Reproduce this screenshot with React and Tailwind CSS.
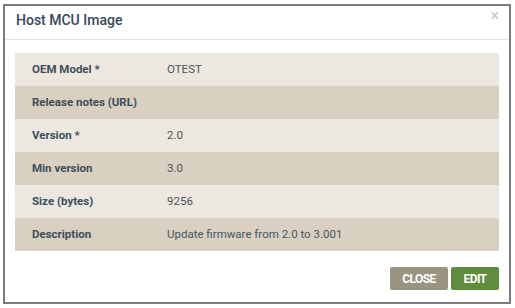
const rows = [
  { label: "OEM Model *", value: "OTEST" },
  { label: "Release notes (URL)", value: "" },
  { label: "Version *", value: "2.0" },
  { label: "Min version", value: "3.0" },
  { label: "Size (bytes)", value: "9256" },
  { label: "Description", value: "Update firmware from 2.0 to 3.001" },
];

const App = () => {
  return (
    <div className="w-[515px] h-[308px] bg-white pl-[3px] pt-[4px] font-['Roboto',sans-serif]">
      <div className="w-[508px] h-[300px] border-2 border-[#7b7b7b] bg-white flex flex-col">
        {/* header */}
        <div className="relative h-[34px] border-b border-[#e5e5e5] pl-[11px] pt-[3px]">
          <h4 className="text-[14px] font-medium text-[#34495e] leading-[22px]">Host MCU Image</h4>
          <span className="absolute right-[10px] top-[1px] text-[16px] text-[#c4c4c4] leading-[18px]">×</span>
        </div>

        {/* body */}
        <div className="px-[10px] pt-[13px]">
          <div className="flex flex-col">
            {rows.map((row, i) => (
              <div
                key={row.label}
                className={
                  "grid grid-cols-[152px_1fr] h-[33px] items-center text-[11.5px] " +
                  (i % 2 === 0 ? "bg-[#ede8df]" : "bg-[#d9d0c1]")
                }
              >
                <span className="pl-[17px] font-bold text-[#3b4e5c]">{row.label}</span>
                <span className="text-[#46565f]">{row.value}</span>
              </div>
            ))}
          </div>
        </div>

        {/* footer */}
        <div className="flex justify-end gap-[3px] pr-[10px] pt-[16px]">
          <button className="w-[58px] h-[23px] rounded-[2px] bg-[#9a9581] text-white text-[12px] font-bold tracking-[-0.6px]">
            CLOSE
          </button>
          <button className="w-[48px] h-[23px] rounded-[2px] bg-[#5f8d3d] text-white text-[12px] font-bold tracking-[-0.6px]">
            EDIT
          </button>
        </div>
      </div>
    </div>
  );
};

export default App;
